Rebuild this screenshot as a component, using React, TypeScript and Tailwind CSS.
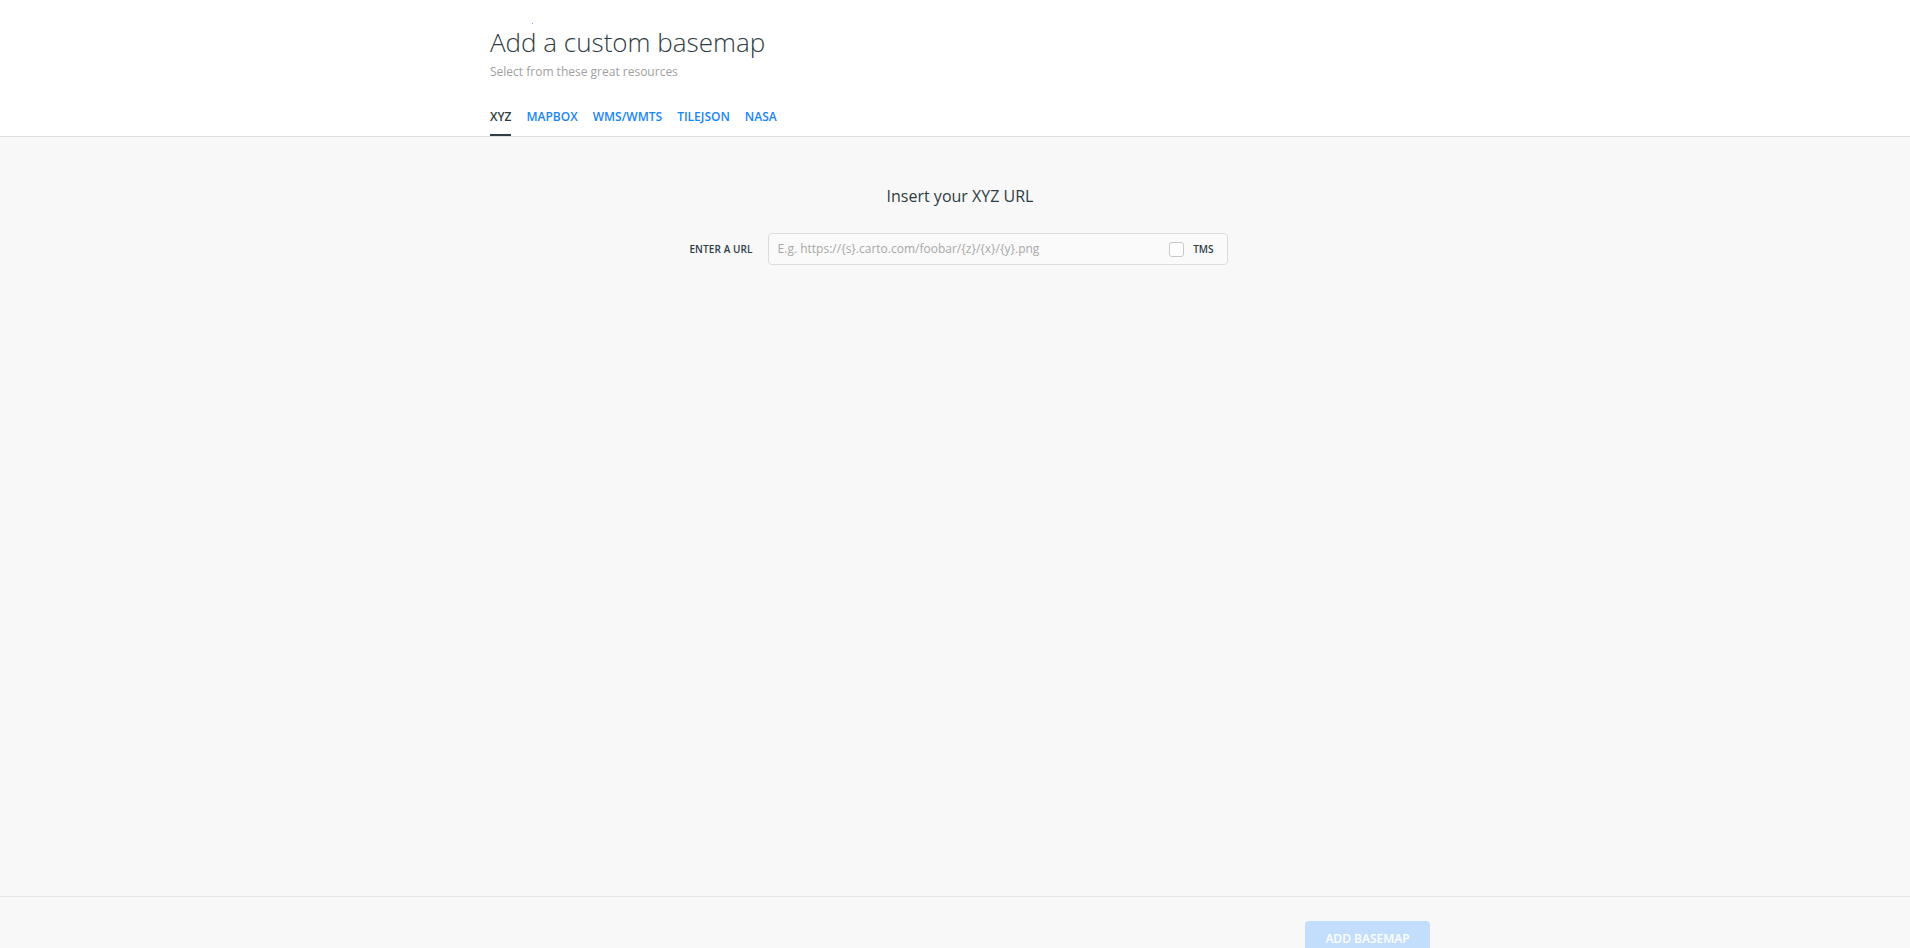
import React from "react";

const tabs = ["XYZ", "MAPBOX", "WMS/WMTS", "TILEJSON", "NASA"];

export default function App() {
  return (
    <div
      className="h-[948px] w-full overflow-hidden flex flex-col bg-[#f8f8f8] text-[#2e3c43]"
      style={{ fontFamily: '"Open Sans", "Liberation Sans", sans-serif' }}
    >
      <header className="relative bg-white border-b border-[#dedede]">
        <span className="absolute left-[532px] top-[23px] w-px h-px bg-[#5aa6f8]" />
        <div className="pl-[490px] pt-[26px]">
          <h1 className="text-[26px] leading-[32px] font-light text-[#2e3c43]">
            Add a custom basemap
          </h1>
          <p className="mt-[6px] text-[12px] leading-[16px] text-[#a0a0a0]">
            Select from these great resources
          </p>
          <nav className="mt-[29px] flex gap-[15px]">
            {tabs.map((t, i) => (
              <div
                key={t}
                className={
                  i === 0
                    ? "pb-[9px] border-b-2 border-[#2e3c43] text-[12px] leading-[16px] font-semibold text-[#2e3c43]"
                    : "pb-[9px] border-b-2 border-transparent text-[12px] leading-[16px] font-semibold text-[#1785fb]"
                }
              >
                {t}
              </div>
            ))}
          </nav>
        </div>
      </header>

      <main className="h-[759px] shrink-0 pl-[490px] pt-[47px]">
        <div className="w-[940px] flex flex-col items-center">
          <h2 className="text-[16px] leading-[24px] text-[#2e3c43]">Insert your XYZ URL</h2>
          <div className="mt-[25px] flex items-center gap-[15px] mr-[3px]">
            <label className="text-[10px] font-semibold tracking-[0.1px] text-[#2e3c43]">
              ENTER A URL
            </label>
            <div className="w-[460px] h-[32px] flex items-center justify-between rounded-[4px] border border-[#dcdcdc] bg-[#fafafa] pl-[9px] pr-[13px]">
              <span className="text-[12px] text-[#a8a8a8]">
                E.g. https://{"{s}"}.carto.com/foobar/{"{z}"}/{"{x}"}/{"{y}"}.png
              </span>
              <div className="flex items-center gap-[9px]">
                <span className="w-[15px] h-[15px] rounded-[3px] border border-[#c8c8c8] bg-white" />
                <span className="text-[10px] font-semibold text-[#2e3c43]">TMS</span>
              </div>
            </div>
          </div>
        </div>
      </main>

      <footer className="border-t border-[#e6e6e6] pl-[490px] pt-[24px]">
        <div className="w-[940px] flex justify-end">
          <button className="w-[125px] h-[36px] rounded-[4px] bg-[#c3defc] text-white text-[12px] font-semibold">
            ADD BASEMAP
          </button>
        </div>
      </footer>
    </div>
  );
}
